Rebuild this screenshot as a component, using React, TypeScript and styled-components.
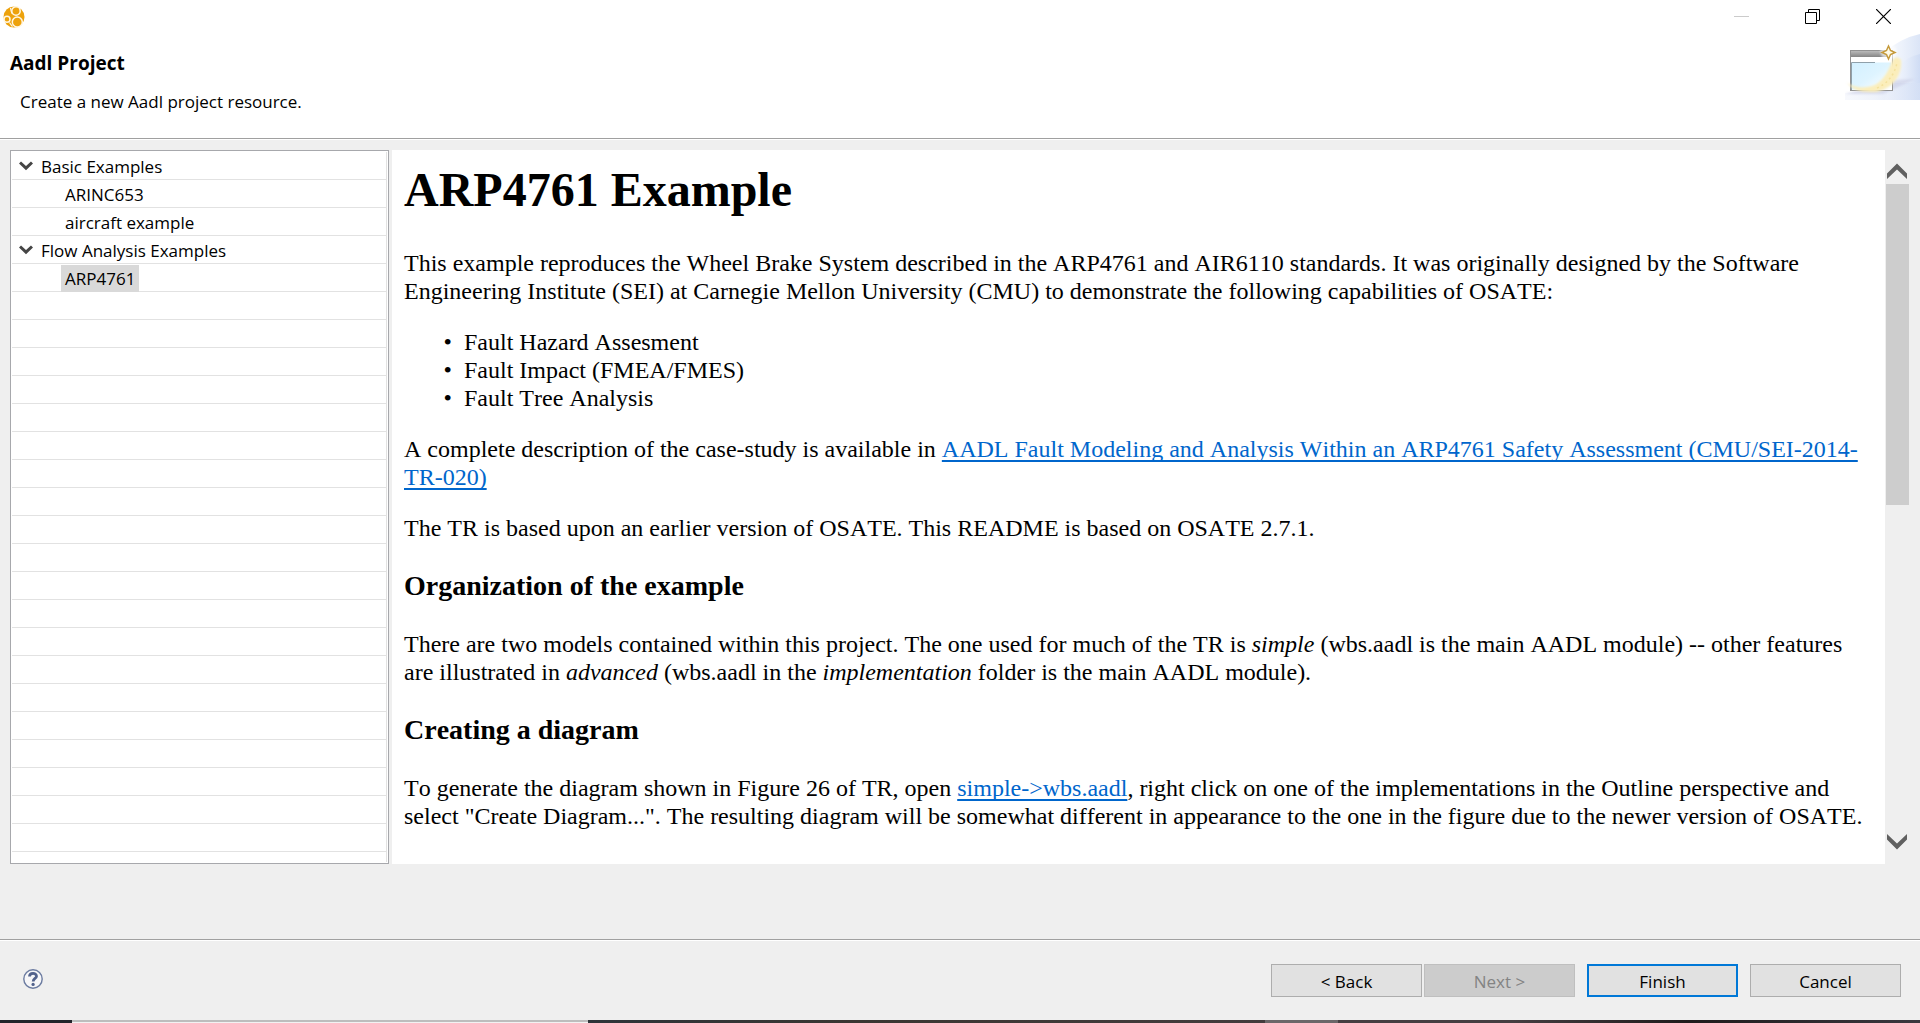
import React from 'react';
import styled, { createGlobalStyle, css } from 'styled-components';

const uiFont = '"Open Sans", "Noto Sans", sans-serif';
const docFont = '"Liberation Serif", "Times New Roman", serif';

const GlobalStyle = createGlobalStyle`
  *, *::before, *::after { box-sizing: border-box; }
  body { margin: 0; background: #efefef; color: #000; font-family: ${uiFont}; font-size: 17px; }
  button { font: inherit; color: inherit; }
`;

const Dialog = styled.div`
  display: flex;
  flex-direction: column;
  height: 100vh;
  min-height: 480px;
  overflow: hidden;
  background: #efefef;
`;

const Banner = styled.header`
  flex: none;
  background: #fff;
  border-bottom: 1px solid #a0a0a0;
`;

const TitleBar = styled.div`
  display: flex;
  justify-content: space-between;
  height: 33px;
`;

const AppIcon = styled.svg`
  display: block;
  width: 22px;
  height: 22px;
  margin: 6px 0 0 3px;
`;

const WindowControls = styled.div`
  display: flex;
  padding-right: 1px;
`;

const WindowButton = styled.button`
  display: grid;
  place-items: center;
  width: 71px;
  height: 33px;
  padding: 0;
  border: 0;
  background: none;
  color: ${(p) => (p.disabled ? '#cbcbcb' : '#000')};
`;

const BannerBody = styled.div`
  display: flex;
  justify-content: space-between;
  height: 105px;
`;

const BannerText = styled.div`
  padding: 18px 0 0 10px;
`;

const Title = styled.h1`
  margin: 0;
  font-size: 19px;
  line-height: 24px;
  font-weight: 700;
`;

const Subtitle = styled.p`
  margin: 0;
  padding: 15px 0 0 10px;
  line-height: 24px;
`;

const Art = styled.svg`
  display: block;
  width: 75px;
  height: 67px;
`;

const Content = styled.main`
  flex: 1;
  min-height: 0;
  display: grid;
  grid-template-columns: 379px minmax(0, 1fr);
  gap: 3px;
  padding: 10px 11px 75px 10px;
  border-top: 1px solid #fff;
`;

const TreePanel = styled.nav`
  overflow: hidden;
  padding: 1px;
  border: 1px solid #a7a8ac;
  background: #fff;
`;

const Tree = styled.ul`
  height: 100%;
  margin: 0;
  padding: 0;
  list-style: none;
  border-right: 1px solid #e2e2e2;
  background: repeating-linear-gradient(#fff 0 27px, #e2e2e2 27px 28px);
`;

const TreeRow = styled.li<{ $leaf?: boolean }>`
  display: flex;
  align-items: center;
  height: 28px;
  padding-left: ${(p) => (p.$leaf ? '49px' : '6px')};
`;

const Toggle = styled.button`
  display: grid;
  place-items: center;
  width: 16px;
  height: 16px;
  padding: 0;
  border: 0;
  background: none;
  color: #454545;
`;

const TreeLabel = styled.span<{ $selected?: boolean }>`
  height: 27px;
  padding: 0 4px;
  line-height: 27px;
  ${(p) => p.$selected && css`background: #d9d9d9;`}
`;

const GroupLabel = styled(TreeLabel)`
  padding: 0 7px;
`;

const Viewer = styled.section`
  display: flex;
  min-width: 0;
  min-height: 0;
`;

const Doc = styled.article`
  flex: 1;
  overflow: hidden;
  padding: 13px 12px 12px;
  background: #fff;
  font-family: ${docFont};
  font-size: 24px;
  line-height: 28px;
  font-kerning: none;

  p, ul { margin: 0 0 23px; }
  ul { padding-left: 60px; list-style-type: "•\\00a0\\00a0"; }
`;

const DocTitle = styled.h2`
  margin: 0 0 32px;
  font-size: 48px;
  line-height: 54px;
`;

const DocHeading = styled.h3`
  margin: 28px 0;
  font-size: 28px;
  line-height: 32px;
`;

const Link = styled.a`
  color: #0066cc;
  text-decoration: underline;
  text-decoration-thickness: 2px;
  text-decoration-skip-ink: none;
  text-underline-offset: 3px;
`;

const ScrollBar = styled.div`
  display: flex;
  flex-direction: column;
  width: 24px;
  padding: 10px 0 10px 1px;
`;

const ScrollButton = styled.button`
  display: grid;
  place-items: center;
  width: 22px;
  height: 24px;
  padding: 0;
  border: 0;
  background: none;
  color: #606060;
`;

const ScrollTrack = styled.div`
  flex: 1;
`;

const ScrollThumb = styled.div`
  width: 23px;
  height: calc(50% - 2px);
  background: #cdcdcd;
`;

const Footer = styled.footer`
  flex: none;
  display: flex;
  align-items: center;
  justify-content: space-between;
  height: 81px;
  padding: 0 19px 0 23px;
  border-top: 1px solid #a0a0a0;
  box-shadow: inset 0 1px #fff;
`;

const HelpButton = styled.button`
  display: grid;
  width: 20px;
  height: 22px;
  padding: 0 0 2px;
  border: 0;
  background: none;
`;

const Buttons = styled.div`
  display: flex;
  gap: 12px;
`;

const ButtonPair = styled.div`
  display: flex;
  gap: 2px;
`;

const PushButton = styled.button<{ $primary?: boolean }>`
  width: 151px;
  height: 33px;
  padding: 2px 0 0;
  border: ${(p) => (p.$primary ? '2px solid #0078d7' : '1px solid #adadad')};
  background: #e1e1e1;

  &:disabled {
    border-color: #bfbfbf;
    background: #cccccc;
    color: #838383;
  }
`;

const TaskStrip = styled.div`
  flex: none;
  display: flex;
  height: 3px;
  background: #22242a;
`;

const StripStart = styled.div`
  width: 72px;
`;

const StripWindow = styled.div`
  width: 516px;
  background: linear-gradient(#bdbdbd 0 2px, #f2f2f2 2px);
`;

const StripTasks = styled.div`
  flex: 677;
  background: linear-gradient(90deg, #2d3439, #3a3632 40%, #433c3d);
`;

const StripActive = styled.div`
  flex: 73;
  background: #6b6769;
`;

const StripTray = styled.div`
  flex: 582;
  background: linear-gradient(90deg, #453e41, #453e41 30%, #1f1b1c 60%, #3a383f);
`;

const Chevron = ({ up, size }: { up?: boolean; size: number }) => (
  <svg width={size} height={size} viewBox="0 0 20 20" aria-hidden="true">
    <path
      d={up ? 'M0 11.5 10 1.5 20 11.5V17L10 7.5 0 17Z' : 'M0 7.5 10 17.5 20 7.5V2L10 11.5 0 2Z'}
      fill="currentColor"
    />
  </svg>
);

const TreeArrow = () => (
  <svg width="14" height="10" viewBox="0 0 14 10" aria-hidden="true">
    <path d="M1 1.5 7 7.2 13 1.5" fill="none" stroke="currentColor" strokeWidth="3" />
  </svg>
);

const Logo = () => (
  <AppIcon viewBox="0 0 22 22" aria-hidden="true">
    <circle cx="11" cy="11" r="10.5" fill="#eda20c" />
    <g fill="#eda20c" stroke="#fff6e2" strokeWidth="1.5">
      <circle cx="13" cy="5" r="4.2" />
      <circle cx="4" cy="13.3" r="3" />
      <circle cx="14.3" cy="16" r="5" />
    </g>
    <path d="M7.500 1.800Q8 5 9 7.500M6.500 16.500Q8 19 9.500 20.500" stroke="#fff6e2" strokeWidth="1.200" fill="none" />
  </AppIcon>
);

const WizardArt = () => (
  <Art viewBox="0 0 75 67" aria-hidden="true">
    <defs>
      <linearGradient id="sweep" x1="0" x2="1">
        <stop offset="0" stopColor="#fff" />
        <stop offset="0.6" stopColor="#e6edfa" />
        <stop offset="1" stopColor="#cfdcf4" />
      </linearGradient>
      <linearGradient id="glass" x1="0" y1="0" x2="1" y2="1">
        <stop offset="0" stopColor="#d3f0ff" />
        <stop offset="0.5" stopColor="#def4ff" />
        <stop offset="1" stopColor="#fff" />
      </linearGradient>
      <linearGradient id="bar" x1="0" y1="0" x2="0" y2="1">
        <stop offset="0" stopColor="#bababa" />
        <stop offset="1" stopColor="#858585" />
      </linearGradient>
      <linearGradient id="floor" x1="0" x2="1">
        <stop offset="0" stopColor="#f4f6fc" />
        <stop offset="1" stopColor="#d5e0f5" />
      </linearGradient>
      <filter id="soft" x="-10%" y="-10%" width="120%" height="120%">
        <feGaussianBlur stdDeviation="0.8" />
      </filter>
    </defs>
    <path d="M75 1Q56 5 40 19L30 67H75Z" fill="url(#sweep)" opacity="0.75" />
    <path d="M75 21Q57 25 50 40L40 67H75Z" fill="url(#sweep)" />
    <path d="M0 60Q35 57 46 50H75V67H0Z" fill="url(#floor)" opacity="0.7" />
    <path d="M0 61 48 47 70 46 38 61Z" fill="#c9cce4" opacity="0.6" filter="url(#soft)" />
    <rect x="5.5" y="17.5" width="42" height="40" fill="#fff" stroke="#929292" />
    <rect x="6" y="18" width="38" height="6" fill="url(#bar)" />
    <rect x="6.5" y="29.5" width="40" height="27" fill="url(#glass)" />
    <path d="M6.5 57V29.5H30" fill="none" stroke="#8fa0aa" />
    <path d="M2 50Q14 57 27 53T48 26Q52 22 56 27C58 45 43 60 25 59Q9 59 2 50Z" fill="#fbeebb" filter="url(#soft)" />
    <path d="M32 55Q48 48 52 30" fill="none" stroke="#f3e19c" strokeWidth="1.5" strokeDasharray="2 3" />
    <circle cx="43.5" cy="19" r="8" fill="#fff" opacity="0.6" filter="url(#soft)" />
    <path d="M43.5 13 45.5 17.5 50 19.5 45.5 21.500 43.5 26 41.500 21.500 37 19.5 41.500 17.5Z" fill="#fffbe8" stroke="#c59a3c" strokeWidth="1.5" />
  </Art>
);

const HelpIcon = () => (
  <svg width="20" height="20" viewBox="0 0 20 20" aria-hidden="true">
    <circle cx="10" cy="10" r="9.2" fill="#f6f6f8" stroke="#6b7ba0" strokeWidth="1.4" />
    <path d="M6.5 7.6C6.5 3.400 13.5 3.400 13.5 7.200 13.5 9.600 10.2 9.400 10.2 12.400" fill="none" stroke="#52628c" strokeWidth="2.800" />
    <circle cx="10.1" cy="15.4" r="1.6" fill="#52628c" />
  </svg>
);

export default function App() {
  return (
    <Dialog>
      <GlobalStyle />
      <Banner>
        <TitleBar>
          <Logo />
          <WindowControls>
            <WindowButton type="button" aria-label="Minimize" disabled>
              <svg width="15" height="15" viewBox="0 0 15 15"><path d="M0 7.5H15" stroke="currentColor" /></svg>
            </WindowButton>
            <WindowButton type="button" aria-label="Restore">
              <svg width="15" height="15" viewBox="0 0 15 15" fill="none" stroke="currentColor">
                <path d="M.5 3.5H11.5V14.5H.5ZM3.5 3.5V.5H14.5V11.5H11.5" />
              </svg>
            </WindowButton>
            <WindowButton type="button" aria-label="Close">
              <svg width="15" height="15" viewBox="0 0 15 15"><path d="M0 0 15 15M15 0 0 15" stroke="currentColor" strokeWidth="1.2" /></svg>
            </WindowButton>
          </WindowControls>
        </TitleBar>
        <BannerBody>
          <BannerText>
            <Title>Aadl Project</Title>
            <Subtitle>Create a new Aadl project resource.</Subtitle>
          </BannerText>
          <WizardArt />
        </BannerBody>
      </Banner>

      <Content>
        <TreePanel aria-label="Examples">
          <Tree>
            <TreeRow>
              <Toggle type="button" aria-label="Collapse Basic Examples"><TreeArrow /></Toggle>
              <GroupLabel>Basic Examples</GroupLabel>
            </TreeRow>
            <TreeRow $leaf><TreeLabel>ARINC653</TreeLabel></TreeRow>
            <TreeRow $leaf><TreeLabel>aircraft example</TreeLabel></TreeRow>
            <TreeRow>
              <Toggle type="button" aria-label="Collapse Flow Analysis Examples"><TreeArrow /></Toggle>
              <GroupLabel>Flow Analysis Examples</GroupLabel>
            </TreeRow>
            <TreeRow $leaf><TreeLabel $selected>ARP4761</TreeLabel></TreeRow>
          </Tree>
        </TreePanel>

        <Viewer>
          <Doc>
            <DocTitle>ARP4761 Example</DocTitle>
            <p>
              This example reproduces the Wheel Brake System described in the ARP4761 and AIR6110 standards. It was
              originally designed by the Software Engineering Institute (SEI) at Carnegie Mellon University (CMU) to
              demonstrate the following capabilities of OSATE:
            </p>
            <ul>
              <li>Fault Hazard Assesment</li>
              <li>Fault Impact (FMEA/FMES)</li>
              <li>Fault Tree Analysis</li>
            </ul>
            <p>
              A complete description of the case-study is available in{' '}
              <Link href="#tr-020">
                AADL Fault Modeling and Analysis Within an ARP4761 Safety Assessment (CMU/SEI-2014-TR-020)
              </Link>
            </p>
            <p>The TR is based upon an earlier version of OSATE. This README is based on OSATE 2.7.1.</p>
            <DocHeading>Organization of the example</DocHeading>
            <p>
              There are two models contained within this project. The one used for much of the TR is <em>simple</em>{' '}
              (wbs.aadl is the main AADL module) -- other features are illustrated in <em>advanced</em> (wbs.aadl in
              the <em>implementation</em> folder is the main AADL module).
            </p>
            <DocHeading>Creating a diagram</DocHeading>
            <p>
              To generate the diagram shown in Figure 26 of TR, open <Link href="#wbs">simple-&gt;wbs.aadl</Link>,
              right click on one of the implementations in the Outline perspective and select "Create Diagram...". The
              resulting diagram will be somewhat different in appearance to the one in the figure due to the newer
              version of OSATE.
            </p>
          </Doc>
          <ScrollBar>
            <ScrollButton type="button" aria-label="Scroll up"><Chevron up size={20} /></ScrollButton>
            <ScrollTrack><ScrollThumb /></ScrollTrack>
            <ScrollButton type="button" aria-label="Scroll down"><Chevron size={20} /></ScrollButton>
          </ScrollBar>
        </Viewer>
      </Content>

      <Footer>
        <HelpButton type="button" aria-label="Help"><HelpIcon /></HelpButton>
        <Buttons>
          <ButtonPair>
            <PushButton type="button">&lt; Back</PushButton>
            <PushButton type="button" disabled>Next &gt;</PushButton>
          </ButtonPair>
          <PushButton type="button" $primary>Finish</PushButton>
          <PushButton type="button">Cancel</PushButton>
        </Buttons>
      </Footer>
      <TaskStrip>
        <StripStart />
        <StripWindow />
        <StripTasks />
        <StripActive />
        <StripTray />
      </TaskStrip>
    </Dialog>
  );
}
